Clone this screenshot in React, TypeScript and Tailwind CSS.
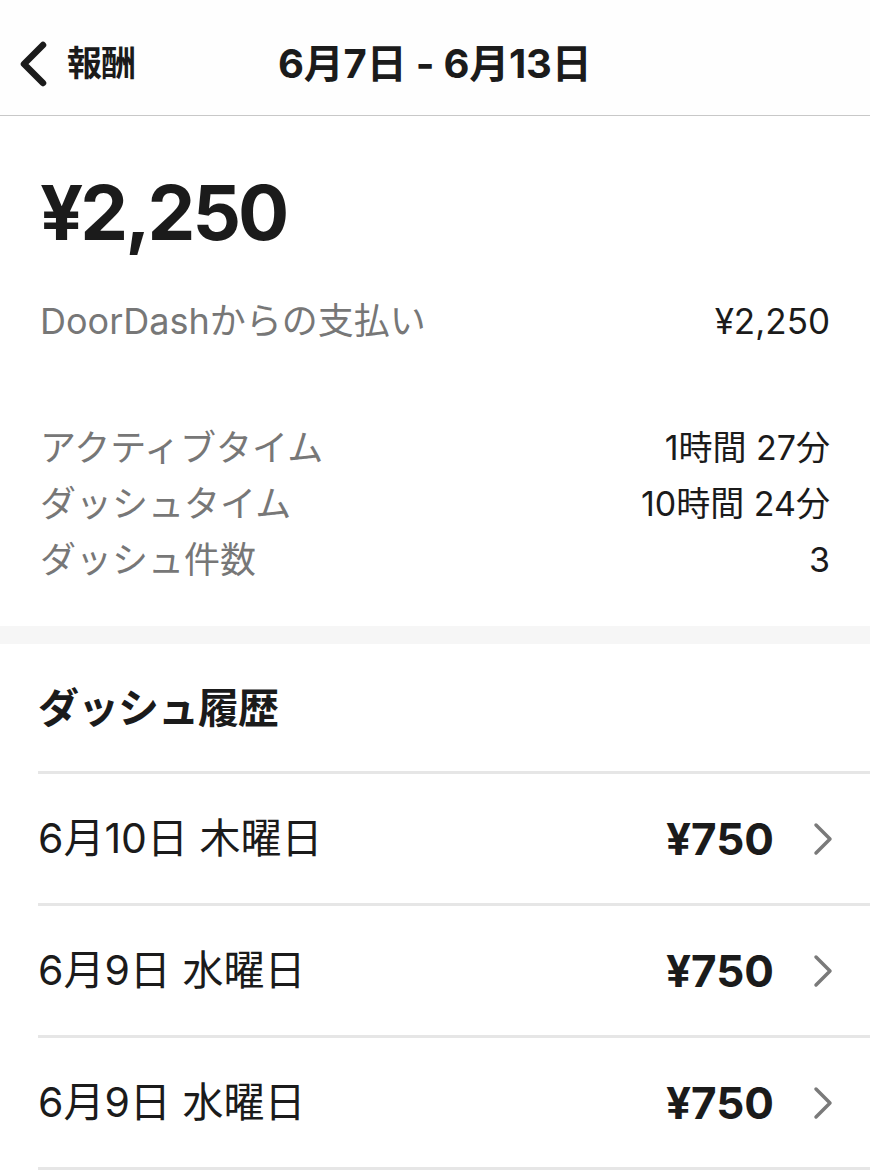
import React from 'react'

const FONT = { fontFamily: '"Inter", "Noto Sans CJK JP", sans-serif' }

const stats = [
	{ label: 'アクティブタイム', value: '1時間 27分' },
	{ label: 'ダッシュタイム', value: '10時間 24分' },
	{ label: 'ダッシュ件数', value: '3' },
]

const history = [
	{ date: '6月10日 木曜日', amount: '¥750' },
	{ date: '6月9日 水曜日', amount: '¥750' },
	{ date: '6月9日 水曜日', amount: '¥750' },
]

const ChevronLeft = () => (
	<svg width="32" height="46" viewBox="0 0 32 46" fill="none">
		<path d="M26 4 L7 23 L26 42" stroke="#1b1b1b" strokeWidth="6.5" strokeLinecap="round" strokeLinejoin="round" />
	</svg>
)

const ChevronRight = () => (
	<svg width="22" height="34" viewBox="0 0 22 34" fill="none">
		<path d="M4 3 L18 17 L4 31" stroke="#7a7a7a" strokeWidth="3.5" strokeLinecap="round" strokeLinejoin="round" />
	</svg>
)

export default function App() {
	return (
		<div className="w-[870px] h-[1172px] overflow-hidden bg-white text-[#1b1b1b]" style={FONT}>
			<header className="relative h-[116px] flex items-center pt-[12px] border-b border-[#c8c8c8] bg-[#fefefe]">
				<div className="flex items-center pl-[17px] gap-[18px]">
					<ChevronLeft />
					<span className="text-[35px] font-bold tracking-[-1px]">報酬</span>
				</div>
				<h1 className="absolute left-[278px] text-[40px] font-bold tracking-[-0.2px]">6月7日 - 6月13日</h1>
			</header>

			<section className="px-[40px] pt-[58px] pb-[42px]">
				<div className="text-[76px] font-bold leading-none tracking-[-3px]">¥2,250</div>
				<div className="mt-[44px] flex justify-between items-center">
					<span className="text-[#777777] text-[36px]">DoorDashからの支払い</span>
					<span className="text-[35px]">¥2,250</span>
				</div>
				<div className="mt-[76px] flex flex-col gap-[8px]">
					{stats.map(stat => (
						<div key={stat.label} className="flex justify-between items-center text-[34px] leading-[48px]">
							<span className="text-[#777777] text-[36px]">{stat.label}</span>
							<span>{stat.value}</span>
						</div>
					))}
				</div>
			</section>

			<div className="h-[18px] bg-[#f6f6f6]" />

			<section className="pl-[38px]">
				<h2 className="text-[41px] font-bold h-[127px] flex items-center tracking-[-1px] pt-[2px]">ダッシュ履歴</h2>
				{history.map((row, i) => (
					<div key={i} className="h-[132px] border-t-[3px] border-[#e6e6e6] flex items-center justify-between pr-[36px]">
						<span className="text-[41px]">{row.date}</span>
						<div className="flex items-center gap-[38px]">
							<span className="text-[44px] font-bold">{row.amount}</span>
							<ChevronRight />
						</div>
					</div>
				))}
				<div className="border-t-[3px] border-[#e6e6e6]" />
			</section>
		</div>
	)
}
